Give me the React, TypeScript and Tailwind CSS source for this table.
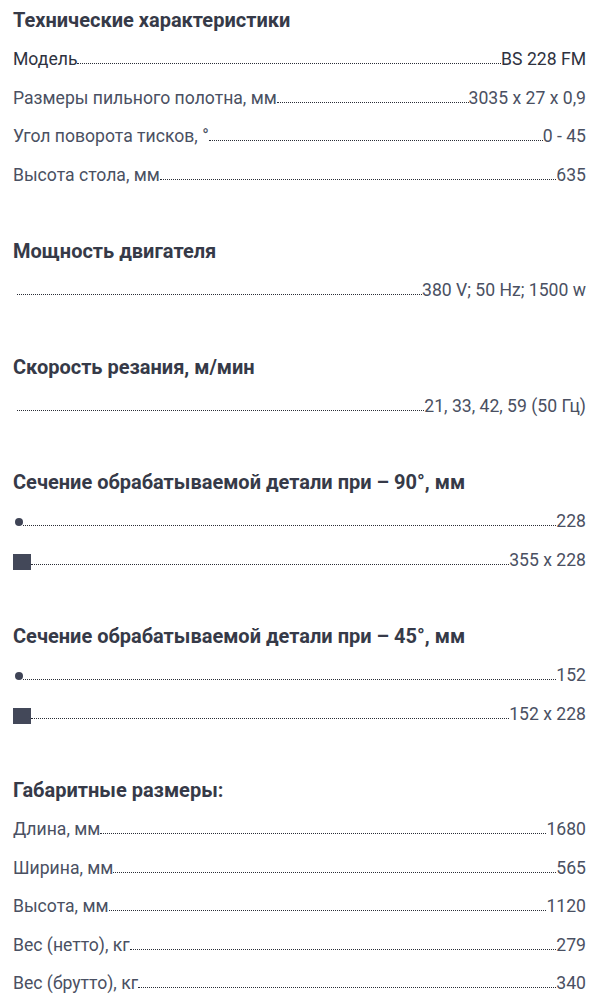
import type { ReactNode } from "react";

type Row = { label: ReactNode; value: string; strong?: boolean };
type Section = { title: string; rows: Row[] };

const Circle = () => <span className="mb-[7px] ml-[2px] h-2 w-2 shrink-0 rounded-full bg-[#3f4456]" />;
const Square = () => <span className="mb-[2px] h-4 w-[18px] shrink-0 bg-[#434859]" />;

const sections: Section[] = [
  {
    title: "Технические характеристики",
    rows: [
      { label: "Модель", value: "BS 228 FM", strong: true },
      { label: "Размеры пильного полотна, мм", value: "3035 x 27 x 0,9" },
      { label: "Угол поворота тисков, °", value: "0 - 45" },
      { label: "Высота стола, мм", value: "635" },
    ],
  },
  {
    title: "Мощность двигателя",
    rows: [{ label: "\u00a0", value: "380 V; 50 Hz; 1500 w" }],
  },
  {
    title: "Скорость резания, м/мин",
    rows: [{ label: "\u00a0", value: "21, 33, 42, 59 (50 Гц)" }],
  },
  {
    title: "Сечение обрабатываемой детали при – 90°, мм",
    rows: [
      { label: <Circle />, value: "228" },
      { label: <Square />, value: "355 x 228" },
    ],
  },
  {
    title: "Сечение обрабатываемой детали при – 45°, мм",
    rows: [
      { label: <Circle />, value: "152" },
      { label: <Square />, value: "152 x 228" },
    ],
  },
  {
    title: "Габаритные размеры:",
    rows: [
      { label: "Длина, мм", value: "1680" },
      { label: "Ширина, мм", value: "565" },
      { label: "Высота, мм", value: "1120" },
      { label: "Вес (нетто), кг", value: "279" },
      { label: "Вес (брутто), кг", value: "340" },
    ],
  },
];

function SpecRow({ row }: { row: Row }) {
  const color = row.strong ? "text-[#2e3240]" : "text-[#4a5062]";
  return (
    <div className="flex h-[38.5px] items-center">
      <div className={`flex h-6 w-full items-end text-[17.6px] leading-6 ${color}`}>
        {typeof row.label === "string" ? <span className="whitespace-pre">{row.label}</span> : row.label}
        <span className="mb-[7px] min-w-0 flex-1 border-b border-dotted border-[#2a2d36]" />
        <span className="whitespace-nowrap">{row.value}</span>
      </div>
    </div>
  );
}

export default function App() {
  return (
    <div className="min-h-screen bg-white pb-4 pl-[13px] pr-4 pt-2 font-['Roboto',sans-serif]">
      {sections.map((section, i) => (
        <section key={section.title} className={i > 0 ? "mt-[45px]" : ""}>
          <h2 className="mb-2 h-6 text-[20px] font-bold leading-6 text-[#363a48]">{section.title}</h2>
          {section.rows.map((row, j) => (
            <SpecRow key={j} row={row} />
          ))}
        </section>
      ))}
    </div>
  );
}
